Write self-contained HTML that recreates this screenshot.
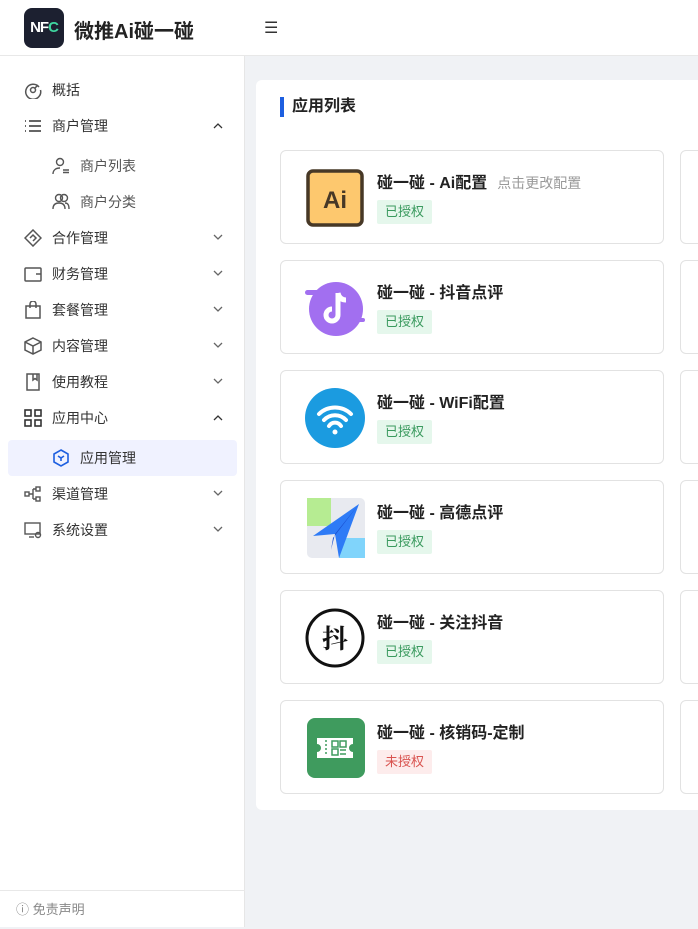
<!DOCTYPE html>
<html><head><meta charset="utf-8"><style>
*{box-sizing:border-box;margin:0;padding:0}
body{width:698px;height:927px;overflow:hidden;font-family:"Liberation Sans","Noto Sans CJK SC",sans-serif;background:#f0f2f5;position:relative;color:#333}
.hdr{position:absolute;left:0;top:0;width:698px;height:56px;background:#fff;border-bottom:1px solid #e8e8e8}
.logo{position:absolute;left:24px;top:8px;width:40px;height:40px;border-radius:8px;background:#1c2030;color:#fff;font-weight:bold;font-size:15px;line-height:40px;text-align:center;letter-spacing:-1px}
.brand{position:absolute;left:74px;top:15px;font-size:20px;font-weight:bold;color:#222}
.ham{position:absolute;left:264px;top:18px;font-size:16px;color:#333}
.side{position:absolute;left:0;top:56px;width:245px;height:871px;background:#fff;border-right:1px solid #e6e6e6}
.it{position:absolute;left:0;width:245px;height:36px;font-size:14px;color:#333;line-height:36px}
.it .ic{position:absolute;left:24px;top:9px;width:18px;height:18px}
.it .t{position:absolute;left:52px}
.it.sub .ic{left:52px}.it.sub .t{left:80px;color:#555}
.it .ar{position:absolute;left:213px;top:14px;width:10px;height:7px}
.act{position:absolute;left:8px;top:440px;width:229px;height:36px;background:#f0f2ff;border-radius:4px}
.foot{position:absolute;left:0;top:890px;width:245px;border-top:1px solid #e8e8e8;height:37px;font-size:13px;color:#888;line-height:38px;padding-left:16px}
.panel{position:absolute;left:256px;top:80px;width:460px;height:730px;background:#fff;border-radius:6px}
.ttl{position:absolute;left:280px;top:97px;height:20px;border-left:4px solid #1d5fe0;padding-left:8px;font-size:16px;font-weight:bold;line-height:20px;color:#222}
.card{position:absolute;left:280px;width:384px;height:94px;border:1px solid #e2e2e2;border-radius:6px;background:#fff}
.card2{position:absolute;left:680px;width:40px;height:94px;border:1px solid #e2e2e2;border-radius:6px;background:#fff}
.card .nm{position:absolute;left:96px;top:18px;font-size:16px;font-weight:bold;color:#222}
.card .nm span{font-weight:normal;font-size:14px;color:#999;margin-left:10px}
.tag{position:absolute;left:96px;top:49px;width:55px;height:24px;background:#e5f7ec;color:#3a9a5e;font-size:13px;line-height:24px;text-align:center;border-radius:2px}
.tag.no{background:#fdecec;color:#d9534f}
.card .ico{position:absolute;left:24px;top:17px;width:60px;height:60px}
</style></head><body>
<div class="hdr"><div class="logo">NF<span style="color:#3fd6a0">C</span></div><div class="brand">微推Ai碰一碰</div><div class="ham">☰</div></div>
<div class="side">
</div>
<div class="act"></div>
<svg width="0" height="0" style="position:absolute"><defs><path id="dn" d="M1 1l4 4 4-4" fill="none" stroke="#666" stroke-width="1.3"/><path id="up" d="M1 6l4-4 4 4" fill="none" stroke="#333" stroke-width="1.3"/></defs></svg>
<div style="position:absolute;left:0;top:72px">
<div class="it" style="top:0"><svg class="ic" viewBox="0 0 18 18" fill="none" stroke="#555" stroke-width="1.5"><path d="M15 6A7.5 7.5 0 1 0 16.5 9"/><circle cx="9" cy="9" r="2.5"/><path d="M10.5 7.5L14 4"/></svg><span class="t">概括</span></div>
<div class="it" style="top:36px"><svg class="ic" viewBox="0 0 18 18" stroke="#333" stroke-width="1.6"><path d="M1 4h1M1 9h1M1 14h1M5 4h12M5 9h12M5 14h12"/></svg><span class="t">商户管理</span><svg class="ar" viewBox="0 0 10 7"><use href="#up"/></svg></div>
<div class="it sub" style="top:76px"><svg class="ic" viewBox="0 0 18 18" fill="none" stroke="#555" stroke-width="1.4"><circle cx="8" cy="5" r="3.5"/><path d="M1 17c0-4 3-6 7-6M11 13h6M11 15.5h6"/></svg><span class="t">商户列表</span></div>
<div class="it sub" style="top:112px"><svg class="ic" viewBox="0 0 18 18" fill="none" stroke="#555" stroke-width="1.4"><circle cx="7" cy="5" r="3.5"/><circle cx="12" cy="5" r="3.5"/><path d="M1 16c0-4 2-6 6-6s6 2 6 6M13 10c3 0 4 2 4 6"/></svg><span class="t">商户分类</span></div>
<div class="it" style="top:148px"><svg class="ic" viewBox="0 0 18 18" fill="none" stroke="#555" stroke-width="1.5"><path d="M9 1l8 8-8 8-8-8z M6 9l3-3 3 3-3 3"/></svg><span class="t">合作管理</span><svg class="ar" viewBox="0 0 10 7"><use href="#dn"/></svg></div>
<div class="it" style="top:184px"><svg class="ic" viewBox="0 0 18 18" fill="none" stroke="#555" stroke-width="1.5"><rect x="1" y="3" width="16" height="13" rx="1"/><path d="M12 9h5"/></svg><span class="t">财务管理</span><svg class="ar" viewBox="0 0 10 7"><use href="#dn"/></svg></div>
<div class="it" style="top:220px"><svg class="ic" viewBox="0 0 18 18" fill="none" stroke="#555" stroke-width="1.5"><rect x="2" y="5" width="14" height="12"/><path d="M6 7V3a3 3 0 0 1 6 0v4"/></svg><span class="t">套餐管理</span><svg class="ar" viewBox="0 0 10 7"><use href="#dn"/></svg></div>
<div class="it" style="top:256px"><svg class="ic" viewBox="0 0 18 18" fill="none" stroke="#555" stroke-width="1.5"><path d="M9 1l8 4v8l-8 4-8-4V5z M1 5l8 4 8-4M9 9v8"/></svg><span class="t">内容管理</span><svg class="ar" viewBox="0 0 10 7"><use href="#dn"/></svg></div>
<div class="it" style="top:292px"><svg class="ic" viewBox="0 0 18 18" fill="none" stroke="#555" stroke-width="1.5"><rect x="3" y="1" width="12" height="16"/><path d="M9 1v6l2-1.5 2 1.5V1"/></svg><span class="t">使用教程</span><svg class="ar" viewBox="0 0 10 7"><use href="#dn"/></svg></div>
<div class="it" style="top:328px"><svg class="ic" viewBox="0 0 18 18" fill="none" stroke="#333" stroke-width="1.6"><rect x="1" y="1" width="6" height="6"/><rect x="11" y="1" width="6" height="6"/><rect x="1" y="11" width="6" height="6"/><rect x="11" y="11" width="6" height="6"/></svg><span class="t">应用中心</span><svg class="ar" viewBox="0 0 10 7"><use href="#up"/></svg></div>
<div class="it sub" style="top:368px"><svg class="ic" viewBox="0 0 18 18" fill="none" stroke="#1d5fe0" stroke-width="1.6"><path d="M9 1l7 4v8l-7 4-7-4V5z"/><path d="M6 7l3 2 3-2M9 9v3"/></svg><span class="t" style="color:#333">应用管理</span></div>
<div class="it" style="top:404px"><svg class="ic" viewBox="0 0 18 18" fill="none" stroke="#555" stroke-width="1.4"><rect x="1" y="7" width="4" height="4"/><rect x="12" y="2" width="4" height="4"/><rect x="12" y="12" width="4" height="4"/><path d="M5 9h4M9 4v10M9 4h3M9 14h3"/></svg><span class="t">渠道管理</span><svg class="ar" viewBox="0 0 10 7"><use href="#dn"/></svg></div>
<div class="it" style="top:440px"><svg class="ic" viewBox="0 0 18 18" fill="none" stroke="#555" stroke-width="1.4"><rect x="1" y="2" width="15" height="11"/><path d="M5 16h5"/><circle cx="14" cy="14" r="2.5"/></svg><span class="t">系统设置</span><svg class="ar" viewBox="0 0 10 7"><use href="#dn"/></svg></div>
</div>
<div class="foot">ⓘ 免责声明</div>
<div class="panel"></div>
<div class="ttl">应用列表</div>

<div class="card" style="top:150px"><svg class="ico" viewBox="0 0 60 60"><rect x="3" y="3" width="54" height="54" rx="5" fill="#fdc86e" stroke="#473826" stroke-width="3.5"/><text x="30" y="40" font-family="Liberation Sans" font-weight="bold" font-size="24" fill="#473826" text-anchor="middle">Ai</text></svg><div class="nm">碰一碰 - Ai配置<span>点击更改配置</span></div><div class="tag">已授权</div></div>
<div class="card" style="top:260px"><svg class="ico" viewBox="0 0 60 60"><circle cx="31" cy="31" r="27" fill="#a26ff0"/><rect x="0" y="12" width="16" height="5" rx="2.5" fill="#a26ff0"/><rect x="48" y="40" width="12" height="4" rx="2" fill="#a26ff0"/><path d="M33 15v22a6 6 0 1 1-6-6M33 15c1 5 4 7 8 7" fill="none" stroke="#fff" stroke-width="5"/></svg><div class="nm">碰一碰 - 抖音点评</div><div class="tag">已授权</div></div>
<div class="card" style="top:370px"><svg class="ico" viewBox="0 0 60 60"><circle cx="30" cy="30" r="30" fill="#1b9be0"/><path d="M14 26a23 23 0 0 1 32 0M19 32a15 15 0 0 1 22 0M24 38a7 7 0 0 1 12 0" fill="none" stroke="#fff" stroke-width="4" stroke-linecap="round"/><circle cx="30" cy="44" r="2.5" fill="#fff"/></svg><div class="nm">碰一碰 - WiFi配置</div><div class="tag">已授权</div></div>
<div class="card" style="top:480px"><svg class="ico" viewBox="0 0 60 60"><rect x="2" y="0" width="58" height="60" rx="5" fill="#e8eaf0"/><rect x="2" y="0" width="24" height="28" fill="#b6ec92"/><rect x="34" y="40" width="26" height="20" fill="#80d4fb"/><path d="M54 6L8 38l22-2 4 24z" fill="#2e7bf6"/><path d="M54 6L28 40l-2 12 4-16z" fill="#1a4fd0"/></svg><div class="nm">碰一碰 - 高德点评</div><div class="tag">已授权</div></div>
<div class="card" style="top:590px"><svg class="ico" viewBox="0 0 60 60"><circle cx="30" cy="30" r="28" fill="#fff" stroke="#111" stroke-width="3"/><text x="30" y="40" font-family="Noto Serif CJK SC,serif" font-weight="bold" font-size="26" fill="#111" text-anchor="middle">抖</text></svg><div class="nm">碰一碰 - 关注抖音</div><div class="tag">已授权</div></div>
<div class="card" style="top:700px"><svg class="ico" viewBox="0 0 60 60"><rect x="2" y="0" width="58" height="60" rx="8" fill="#3f9b5e"/><path d="M12 20h36v6a4 4 0 0 0 0 8v6H12v-6a4 4 0 0 0 0-8z" fill="#fff"/><path d="M21 22v16" stroke="#3f9b5e" stroke-dasharray="2 2" stroke-width="1.5"/><rect x="27" y="23" width="6" height="6" fill="none" stroke="#3f9b5e" stroke-width="1.5"/><rect x="35" y="23" width="6" height="6" fill="none" stroke="#3f9b5e" stroke-width="1.5"/><rect x="27" y="31" width="6" height="6" fill="none" stroke="#3f9b5e" stroke-width="1.5"/><path d="M35 32h6M35 36h6" stroke="#3f9b5e" stroke-width="1.5"/></svg><div class="nm">碰一碰 - 核销码-定制</div><div class="tag no">未授权</div></div>

<div class="card2" style="top:150px"></div><div class="card2" style="top:260px"></div><div class="card2" style="top:370px"></div><div class="card2" style="top:480px"></div><div class="card2" style="top:590px"></div><div class="card2" style="top:700px"></div>
</body></html>
